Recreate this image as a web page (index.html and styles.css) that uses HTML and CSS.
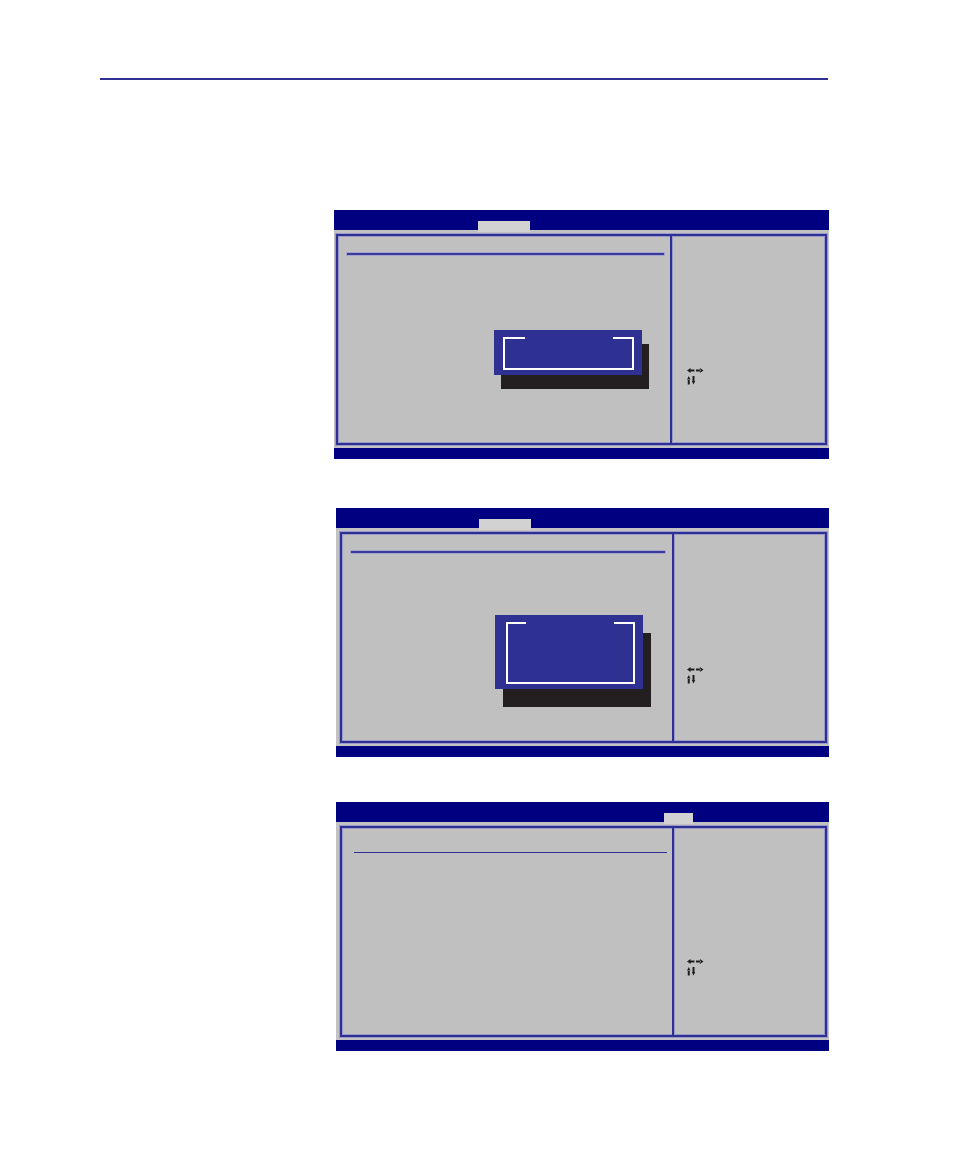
FILE: index.html
```html
<!DOCTYPE html>
<html>
<head>
<meta charset="utf-8">
<link rel="stylesheet" href="styles.css">
</head>
<body>
<div class="page">
  <div class="rule"></div>

  <section class="screen s1">
    <div class="hdr"><div class="tab"></div></div>
    <div class="body">
      <div class="frame">
        <div class="left">
          <div class="title-line"></div>
          <div class="popup">
            <div class="bracket"></div>
          </div>
        </div>
        <div class="right">
          <svg class="keys" width="17" height="17" viewBox="0 0 17 17"><path d="M0 2.5 L3.6 0 L3.6 5 Z M3 1.5 H7.5 V3.5 H3 Z M16.5 2.5 L12.9 0 L12.9 5 Z M9 1.5 H13.5 V3.5 H9 Z M1.75 8 L0 11.6 L3.5 11.6 Z M0.75 11 H2.75 V16.5 H0.75 Z M6.5 16.5 L4.75 12.9 L8.25 12.9 Z M5.5 8 H7.5 V13.5 H5.5 Z" fill="#1e1e1e"/></svg>
        </div>
      </div>
    </div>
    <div class="ftr"></div>
  </section>

  <section class="screen s2">
    <div class="hdr"><div class="tab"></div></div>
    <div class="body">
      <div class="frame">
        <div class="left">
          <div class="title-line"></div>
          <div class="popup">
            <div class="bracket"></div>
          </div>
        </div>
        <div class="right">
          <svg class="keys" width="17" height="17" viewBox="0 0 17 17"><path d="M0 2.5 L3.6 0 L3.6 5 Z M3 1.5 H7.5 V3.5 H3 Z M16.5 2.5 L12.9 0 L12.9 5 Z M9 1.5 H13.5 V3.5 H9 Z M1.75 8 L0 11.6 L3.5 11.6 Z M0.75 11 H2.75 V16.5 H0.75 Z M6.5 16.5 L4.75 12.9 L8.25 12.9 Z M5.5 8 H7.5 V13.5 H5.5 Z" fill="#1e1e1e"/></svg>
        </div>
      </div>
    </div>
    <div class="ftr"></div>
  </section>

  <section class="screen s3">
    <div class="hdr"><div class="tab"></div></div>
    <div class="body">
      <div class="frame">
        <div class="left">
          <div class="title-line"></div>
        </div>
        <div class="right">
          <svg class="keys" width="17" height="17" viewBox="0 0 17 17"><path d="M0 2.5 L3.6 0 L3.6 5 Z M3 1.5 H7.5 V3.5 H3 Z M16.5 2.5 L12.9 0 L12.9 5 Z M9 1.5 H13.5 V3.5 H9 Z M1.75 8 L0 11.6 L3.5 11.6 Z M0.75 11 H2.75 V16.5 H0.75 Z M6.5 16.5 L4.75 12.9 L8.25 12.9 Z M5.5 8 H7.5 V13.5 H5.5 Z" fill="#1e1e1e"/></svg>
        </div>
      </div>
    </div>
    <div class="ftr"></div>
  </section>
</div>
</body>
</html>
```

FILE: styles.css
```css
* { box-sizing: border-box; }
html, body { margin: 0; padding: 0; background: #ffffff; }
body { font-family: "Liberation Sans", Arial, sans-serif; }

.page {
  padding-top: 78px;
  display: flex;
  flex-direction: column;
  align-items: flex-start;
}

.rule {
  margin-left: 100px;
  width: 728px;
  height: 2px;
  background: #2e3192;
}

.screen {
  display: flex;
  flex-direction: column;
  height: 249px;
  background: #c0c0c0;
}
.s1 { margin-top: 130px; margin-left: 334px; width: 495px; }
.s2 { margin-top: 49px; margin-left: 336px; width: 493px; }
.s3 { margin-top: 45px; margin-left: 336px; width: 493px; }

.hdr {
  height: 20px;
  flex: none;
  background: #000080;
  display: flex;
  align-items: flex-end;
}
.tab {
  height: 11px;
  margin-bottom: -2px;
  background: #d2d2d2;
  position: relative;
  z-index: 1;
}
.s1 .tab { margin-left: 144px; width: 52px; }
.s2 .tab { margin-left: 143px; width: 52px; }
.s3 .tab { margin-left: 328px; width: 29px; }

.ftr {
  height: 11px;
  flex: none;
  background: #000080;
}

.body {
  flex: 1;
  min-height: 0;
  padding: 4px 2px 3px 2px;
  background: #c2c2c4;
  display: flex;
}
.s2 .body, .s3 .body { padding-left: 4px; }

.frame {
  flex: 1;
  display: grid;
  border: 2px solid #2e2e96;
  box-shadow: 0 0 0 1px #9a9ac6, inset 0 0 0 1px #9a9ac6;
  background: #c0c0c0;
}
.s1 .frame { grid-template-columns: 334px 1fr; }
.s2 .frame, .s3 .frame { grid-template-columns: 332px 1fr; }

.left {
  position: relative;
  border-right: 2px solid #2e2e96;
  box-shadow: 1px 0 0 #9a9ac6;
  display: flex;
  flex-direction: column;
}

.title-line {
  height: 2px;
  background: #3a3a9c;
  box-shadow: 0 0 0 1px #a4a4cc;
}
.s1 .title-line { margin: 17px 6px 0 9px; }
.s2 .title-line { margin: 17px 7px 0 9px; }
.s3 .title-line { margin: 24px 5px 0 12px; height: 1px; background: #2e3192; box-shadow: none; }

.popup {
  position: absolute;
  background: #2e3192;
}
.s1 .popup { left: 156px; top: 94px; width: 148px; height: 45px; box-shadow: 7px 14px 0 #231f20; }
.s2 .popup { left: 153px; top: 81px; width: 148px; height: 74px; box-shadow: 8px 18px 0 #231f20; }

.bracket {
  position: absolute;
  border: 2px solid #ffffff;
  border-top: none;
}
.bracket::before,
.bracket::after {
  content: "";
  position: absolute;
  top: 0;
  height: 2px;
  background: #ffffff;
}
.bracket::before { left: -2px; width: 22px; }
.bracket::after { right: -2px; width: 21px; }
.s1 .bracket { left: 9px; top: 7px; width: 131px; height: 33px; }
.s2 .bracket { left: 11px; top: 7px; width: 129px; height: 62px; }
.s2 .bracket::before { width: 20px; }

.right {
  padding: 132px 0 0 15px;
}
.s2 .right, .s3 .right { padding-left: 13px; padding-top: 133px; }
.s3 .right { padding-top: 131px; }
.keys { display: block; }
```
